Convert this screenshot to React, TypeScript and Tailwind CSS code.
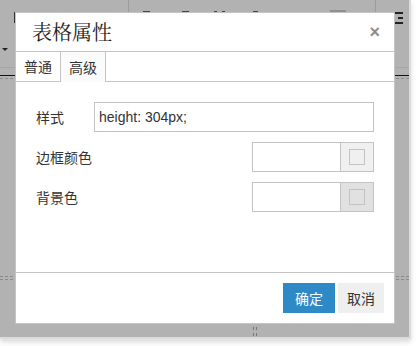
import React from "react";

const cjk = "font-['Microsoft_YaHei','Noto_Sans_CJK_SC',sans-serif]";

function ColorField({ swatchBg }: { swatchBg: string }) {
  return (
    <div className="flex h-[30px] w-[122px] border border-[#c3c3c3] bg-white">
      <div className="flex-1" />
      <div className={`flex w-[33px] items-center justify-center border-l border-[#c3c3c3] ${swatchBg}`}>
        <div className="h-[16px] w-[16px] border border-[#c3c3c3]" />
      </div>
    </div>
  );
}

function Dashes({ className }: { className: string }) {
  // dashed guide lines of the editor under the overlay
  return <div className={`absolute border-t border-dashed border-[#8a8a8a] ${className}`} />;
}

export default function App() {
  return (
    <div className="relative h-[346px] w-[417px] bg-white">
      <div className="relative h-[339px] w-[411px] overflow-hidden border-r-2 border-b-2 border-[#dcdcdc] bg-[#b2b2b2] shadow-[0_3px_5px_rgba(0,0,0,0.15)]">
        {/* editor bits visible through the overlay */}
        <div className="absolute left-[128px] top-0 h-[12px] w-px bg-[#9c9c9c]" />
        <div className="absolute left-[375px] top-0 h-[12px] w-px bg-[#9c9c9c]" />
        <div className="absolute left-[14px] top-[12px] h-[11px] w-px bg-[#333]" />
        <div className="absolute left-[143px] top-[11px] h-px w-[7px] bg-[#444]" />
        <div className="absolute left-[182px] top-[11px] h-px w-[7px] bg-[#444]" />
        <div className="absolute left-[214px] top-[11px] h-px w-[3px] bg-[#444]" />
        <div className="absolute left-[222px] top-[11px] h-px w-[3px] bg-[#444]" />
        <div className="absolute left-[253px] top-[11px] h-px w-[5px] bg-[#444]" />
        <div className="absolute left-[330px] top-[10px] h-[3px] w-[16px] bg-[#8f8f8f]" />
        <div className="absolute left-[395px] top-[12px] flex flex-col gap-[3px]">
          <div className="h-[2px] w-[8px] bg-[#222]" />
          <div className="ml-[3px] h-[2px] w-[5px] bg-[#222]" />
          <div className="h-[2px] w-[8px] bg-[#222]" />
        </div>
        <div className="absolute left-[2px] top-[48px] h-0 w-0 border-x-[3px] border-t-[3px] border-x-transparent border-t-[#222]" />
        <div className="absolute left-0 top-[67px] h-px w-full bg-[#a6a6a6]" />
        <div className="absolute left-0 top-[75px] h-px w-full bg-[#111]" />
        <Dashes className="left-0 top-[78px] w-full" />
        <Dashes className="left-0 top-[276px] w-full" />
        <Dashes className="left-0 top-[279px] w-full" />
        <div className="absolute left-[253px] top-[327px] flex gap-[2px]">
          <div className="flex flex-col gap-[3px]">
            <div className="h-[3px] w-px bg-[#777]" />
            <div className="h-[3px] w-px bg-[#777]" />
          </div>
          <div className="flex flex-col gap-[3px]">
            <div className="h-[3px] w-px bg-[#777]" />
            <div className="h-[3px] w-px bg-[#777]" />
          </div>
        </div>

        {/* dialog */}
        <div className={`absolute left-[15px] top-[12px] flex h-[312px] w-[380px] flex-col border border-[#c4c4c4] bg-white text-[#333] ${cjk}`}>
          <div className="flex h-[39px] items-center justify-between border-b border-[#c4c4c4] pl-[16px] pr-[14px]">
            <span className="font-['Noto_Serif_CJK_SC','SimSun','Liberation_Serif',serif] text-[20px] leading-none text-[#222]">
              表格属性
            </span>
            <span className="font-['Liberation_Sans',sans-serif] text-[18px] font-bold leading-none text-[#8c8c8c]">
              ×
            </span>
          </div>
          <div className="flex h-[30px] text-[14px]">
            <div className="flex w-[45px] items-center justify-center border-r border-b border-[#c4c4c4]">普通</div>
            <div className="flex w-[45px] items-center justify-center border-r border-[#c4c4c4] bg-[#fbfbfb]">高级</div>
            <div className="flex-1 border-b border-[#c4c4c4]" />
          </div>
          <div className="flex flex-1 flex-col gap-[10px] px-[20px] pt-[20px] text-[14px]">
            <div className="flex h-[30px] items-center">
              <span className="w-[58px]">样式</span>
              <div className="flex h-[30px] flex-1 items-center border border-[#c3c3c3] px-[4px] font-['Liberation_Sans',Arial,sans-serif] text-[14px] text-[#333]">
                height: 304px;
              </div>
            </div>
            <div className="flex h-[30px] items-center justify-between">
              <span>边框颜色</span>
              <ColorField swatchBg="bg-[#f0f0f0]" />
            </div>
            <div className="flex h-[30px] items-center justify-between">
              <span>背景色</span>
              <ColorField swatchBg="bg-[#e1e1e1]" />
            </div>
          </div>
          <div className="flex h-[51px] justify-end gap-[3px] border-t border-[#c4c4c4] pr-[10px] pt-[10px] text-[14px]">
            <button className="h-[30px] w-[52px] bg-[#2d8ac7] text-white">确定</button>
            <button className="h-[30px] w-[46px] bg-[#efefef] text-[#333]">取消</button>
          </div>
        </div>
      </div>
    </div>
  );
}
